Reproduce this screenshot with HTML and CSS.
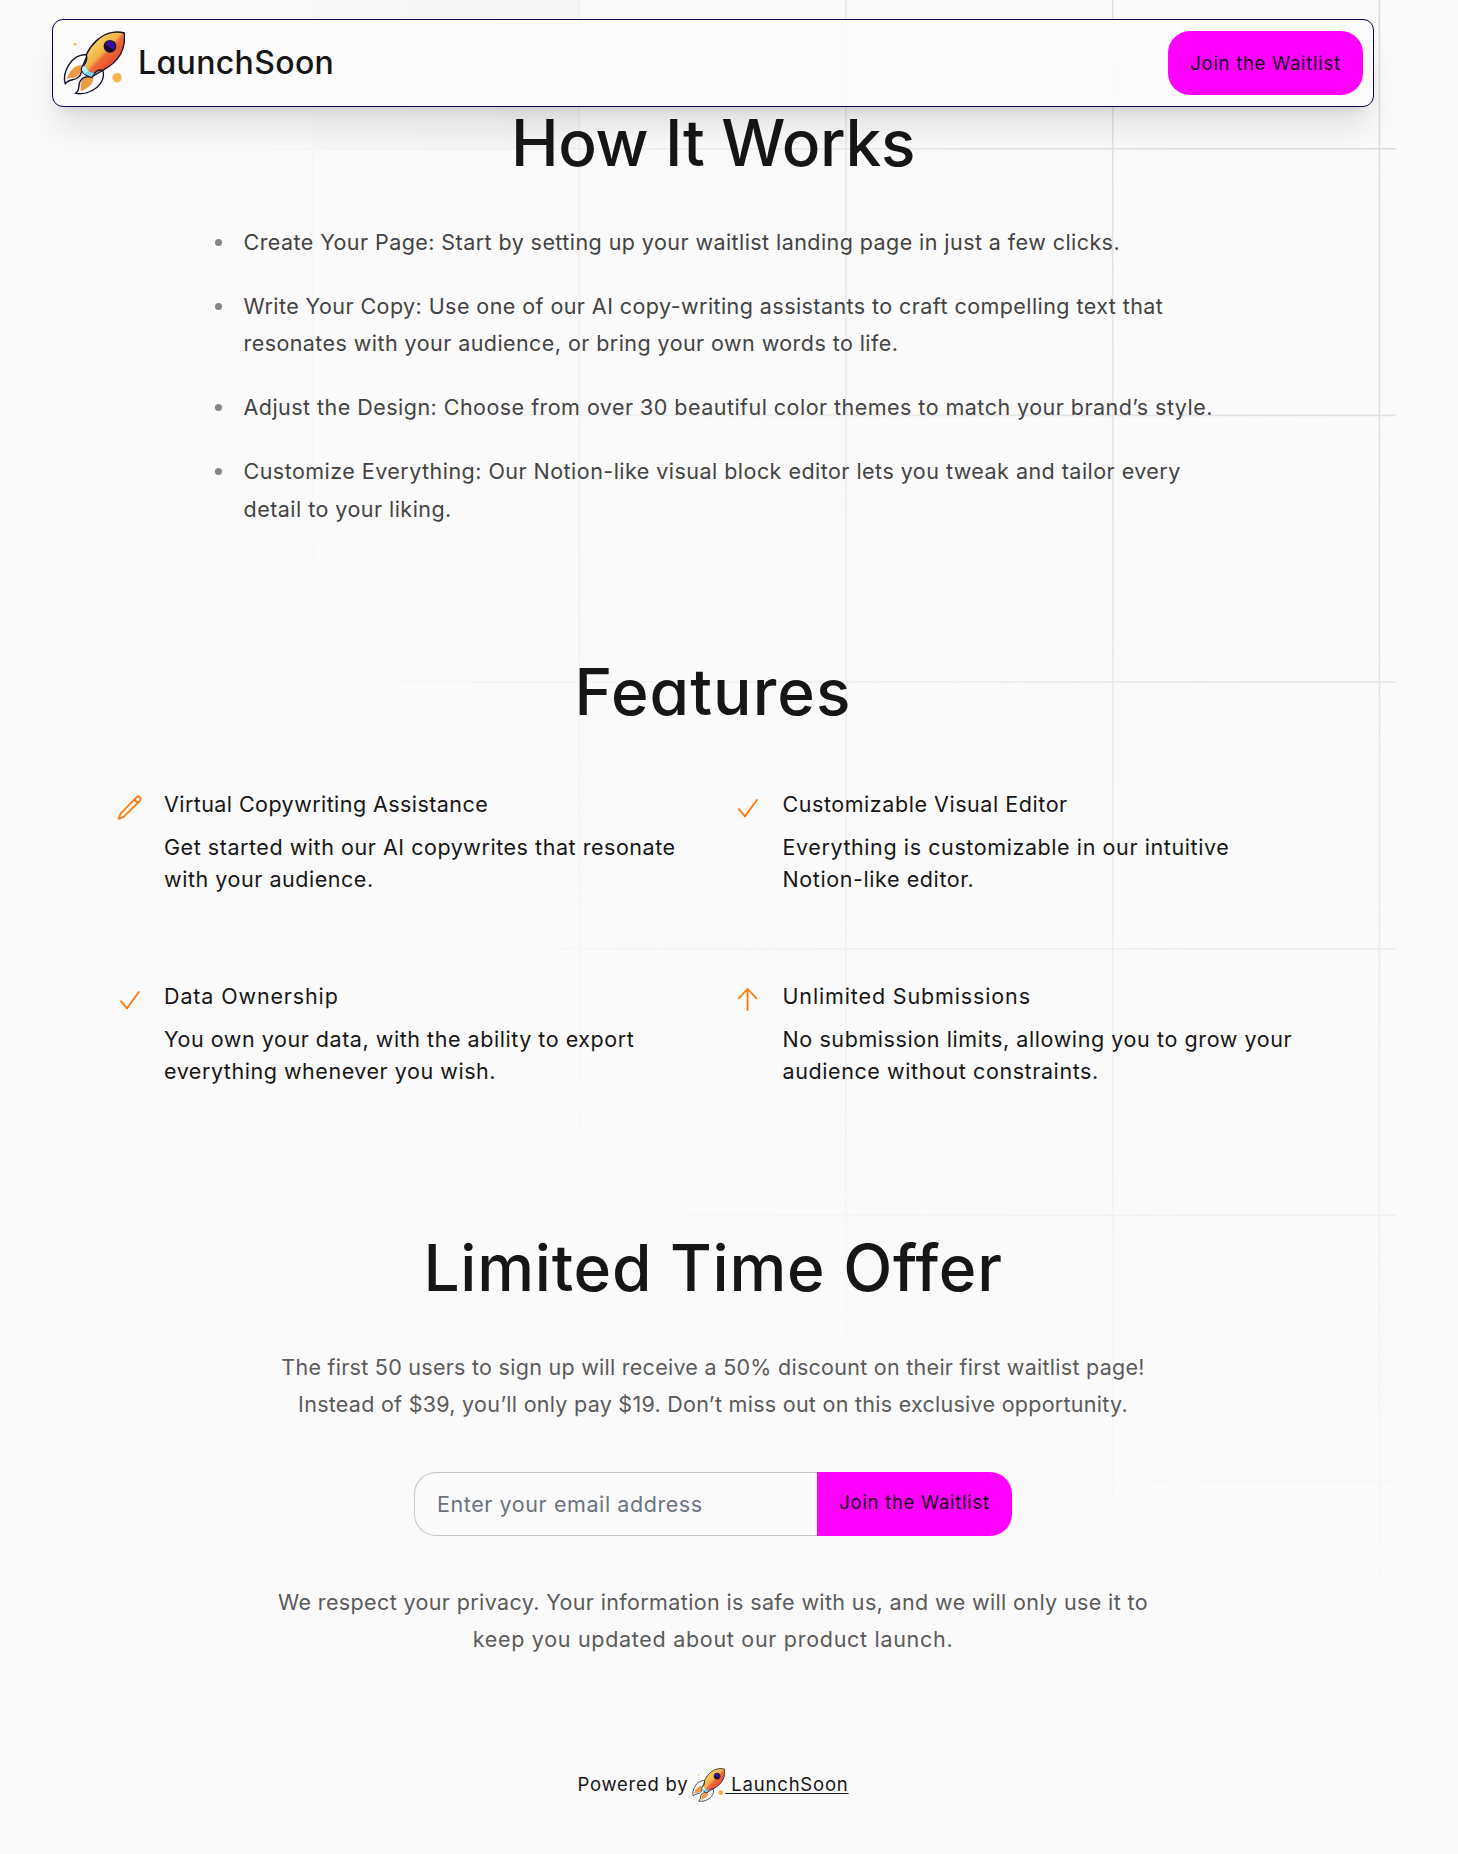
FILE: index.html
```html
<!DOCTYPE html>
<html lang="en">
<head>
<meta charset="utf-8">
<title>LaunchSoon</title>
<link rel="stylesheet" href="styles.css">
</head>
<body>
<svg class="backdrop" viewBox="0 0 1396 1640" aria-hidden="true">
  <defs>
    <radialGradient id="fade" gradientUnits="userSpaceOnUse" cx="0" cy="0" r="1" gradientTransform="translate(1396 0) scale(1230 1660)">
      <stop offset="0" stop-color="#fff"/>
      <stop offset="1" stop-color="#fff" stop-opacity="0"/>
    </radialGradient>
    <mask id="corner" maskUnits="userSpaceOnUse" x="0" y="0" width="1396" height="1640"><rect width="1396" height="1640" fill="url(#fade)"/></mask>
  </defs>
  <g mask="url(#corner)">
    <rect x="312.7" y="0" width="266.7" height="148.7" fill="#000" fill-opacity=".05"/>
    <path d="M46 0V1640M312.7 0V1640M579.4 0V1640M846 0V1640M1112.7 0V1640M1379.4 0V1640M0 148.8H1396M0 415.4H1396M0 682H1396M0 948.8H1396M0 1215.4H1396M0 1482H1396" fill="none" stroke="#dadadb" stroke-width="1.6"/>
  </g>
</svg>

<svg class="defs" width="0" height="0" aria-hidden="true">
  <defs>
    <linearGradient id="hull" x1="0" y1="0" x2="1" y2="1">
      <stop offset=".3" stop-color="#f6cb58"/><stop offset=".47" stop-color="#f4b04c"/><stop offset=".53" stop-color="#ee6a38"/><stop offset=".75" stop-color="#e9452c"/>
    </linearGradient>
    <symbol id="rocket" viewBox="63 63 192 192">
      <g stroke="#15122b" stroke-width="4.2" stroke-linejoin="round">
        <path fill="#fff" d="M142 135C118 131 97 146 85 167C74 186 70 204 76 222C84 207 101 212 112 204C121 198 125 188 124 178Z"/>
        <path fill="#fff" d="M188 181C194 198 187 216 172 231C154 247 128 254 106 250C121 241 114 229 119 217C125 203 139 199 152 202Z"/>
        <path stroke="none" fill="#f19b45" d="M124 165C106 165 88 180 80 208C91 201 103 207 112 199C120 191 123 184 124 178Z"/>
        <path stroke="none" fill="#f19b45" d="M160 203C162 218 147 235 120 244C126 235 119 226 124 215C130 204 143 202 152 202Z"/>
        <path fill="url(#hull)" d="M126 171C137 162 143 152 139 134C152 106 181 72 218 67C232 65 243 66 253 69C255 91 253 111 242 132C231 152 211 169 188 181C173 177 163 188 156 202C142 201 128 190 124 178Z"/>
        <path stroke="none" fill="#6fd3f2" d="M128 171L136 169C142 181 151 189 163 190L155 200C142 199 129 190 126 178Z"/>
        <path stroke="none" fill="#b5f4fb" d="M128 171L136 169C138 175 141 179 145 183L134 192C130 188 127 183 126 178Z"/>
        <circle cx="210" cy="109" r="17" fill="#3d0aa8"/>
        <path stroke="none" fill="#12052f" d="M195 104L222 119A16 16 0 0 1 195 104Z"/>
      </g>
      <circle cx="231" cy="203" r="14" fill="#f6b450"/>
      <circle cx="105" cy="103" r="4.5" fill="#f8c065"/>
    </symbol>
    <symbol id="check" viewBox="0 0 28 28"><path d="M4.8 16.1L11 23.4L22.8 7"/></symbol>
    <symbol id="pencil" viewBox="0 0 28 28"><path d="M2.6 25.8L4.6 20.6L20.2 4.6C21.4 3.4 22.9 3.3 23.9 4.2C24.9 5.2 24.8 6.7 23.6 8L7.7 23.8ZM19 5.8C19 8 20.3 9.2 22.4 9.2"/></symbol>
    <symbol id="arrow" viewBox="0 0 28 28"><path d="M13.6 25V4M4.8 13.4L13.6 4L22.4 13.4"/></symbol>
  </defs>
</svg>

<header class="nav">
  <a class="brand"><svg class="brand-mark"><use href="#rocket"/></svg><span class="brand-name">LaunchSoon</span></a>
  <a class="btn">Join the Waitlist</a>
</header>

<main>
  <section class="how">
    <h2 class="tight">How It Works</h2>
    <ul>
      <li>Create Your Page: Start by setting up your waitlist landing page in just a few clicks.</li>
      <li>Write Your Copy: Use one of our AI copy-writing assistants to craft compelling text that<br>resonates with your audience, or bring your own words to life.</li>
      <li class="wide">Adjust the Design: Choose from over 30 beautiful color themes to match your brand’s style.</li>
      <li class="wide">Customize Everything: Our Notion-like visual block editor lets you tweak and tailor every<br>detail to your liking.</li>
    </ul>
  </section>

  <section class="features">
    <h2>Features</h2>
    <div class="grid">
      <article><svg class="icon"><use href="#pencil"/></svg><div><h3>Virtual Copywriting Assistance</h3><p>Get started with our AI copywrites that resonate<br>with your audience.</p></div></article>
      <article><svg class="icon"><use href="#check"/></svg><div><h3 class="wide">Customizable Visual Editor</h3><p class="wide">Everything is customizable in our intuitive<br>Notion-like editor.</p></div></article>
      <article><svg class="icon"><use href="#check"/></svg><div><h3 class="wider">Data Ownership</h3><p>You own your data, with the ability to export<br>everything whenever you wish.</p></div></article>
      <article><svg class="icon"><use href="#arrow"/></svg><div><h3 class="wider">Unlimited Submissions</h3><p class="wide">No submission limits, allowing you to grow your<br>audience without constraints.</p></div></article>
    </div>
  </section>

  <section class="offer">
    <h2>Limited Time Offer</h2>
    <p class="copy">The first 50 users to sign up will receive a 50% discount on their first waitlist page!<br>Instead of $39, you’ll only pay $19. Don’t miss out on this exclusive opportunity.</p>
    <form class="signup"><input type="email" placeholder="Enter your email address"><button class="btn" type="button">Join the Waitlist</button></form>
    <p class="copy privacy">We respect your privacy. Your information is safe with us, and we will only use it to<br><span class="wider">keep you updated about our product launch.</span></p>
  </section>
</main>

<footer>
  <span>Powered by</span>
  <svg class="footer-mark"><use href="#rocket"/></svg>
  <a class="footer-link">&nbsp;LaunchSoon</a>
</footer>
</body>
</html>
```
FILE: styles.css
```css
* { box-sizing: border-box; }

html { background: #fafafa; overflow: hidden; }

body {
  margin: 0;
  position: relative;
  width: 1426px;
  min-height: 1854px;
  font: 400 21.5px/32px Inter, "Open Sans", sans-serif;
  color: #161616;
}

.backdrop {
  position: absolute;
  left: 0;
  top: 0;
  width: 1396px;
  height: 1640px;
  z-index: -1;
}

.defs { position: absolute; }

h2, h3, p, ul { margin: 0; padding: 0; font-weight: 400; }

.nav {
  position: relative;
  top: 0;
  z-index: 2;
  display: flex;
  align-items: center;
  justify-content: space-between;
  width: 1322px;
  height: 88px;
  margin: 19px auto 0;
  padding: 0 10px 0 8px;
  border: 1px solid #10004f;
  border-radius: 11px;
  background: rgba(251, 251, 251, .95);
  box-shadow: 0 26px 33px -6px rgba(0, 0, 0, .1), 0 10px 13px -8px rgba(0, 0, 0, .1);
}

.brand { display: flex; align-items: center; gap: 13px; }
.brand-mark { width: 64px; height: 64px; }
.brand-name {
  font-size: 32px;
  font-weight: 500;
  letter-spacing: .35px;
  font-feature-settings: "cv11";
}

.btn {
  display: flex;
  align-items: center;
  justify-content: center;
  width: 195px;
  height: 64px;
  padding: 0;
  border: 0;
  border-radius: 22px;
  background: #f0f;
  color: #160016;
  font: 400 18.5px/28px Inter, sans-serif;
  letter-spacing: .71px;
}

h2 {
  font-size: 64px;
  line-height: 72px;
  font-weight: 500;
  letter-spacing: 1.1px;
  text-align: center;
  font-feature-settings: "cv11";
}
h2.tight { letter-spacing: -.35px; }
.offer h2 { letter-spacing: .75px; }

.how ul {
  list-style: none;
  margin: 44.5px 0 0 243.5px;
  display: grid;
  gap: 26.5px;
  line-height: 37.5px;
  letter-spacing: .43px;
  color: #434343;
  white-space: nowrap;
}
.how li.wide { letter-spacing: .465px; }
.how li::before {
  content: "";
  float: left;
  width: 7px;
  height: 7px;
  margin: 15px 0 0 -28.5px;
  border-radius: 50%;
  background: #858585;
}

.features { margin-top: 127.5px; }
.grid {
  display: grid;
  grid-template-columns: 618.5px 1fr;
  row-gap: 85px;
  margin: 60px 0 0 115.5px;
  letter-spacing: .54px;
  white-space: nowrap;
}
.grid article { display: flex; gap: 20.5px; }
.grid h3 { font-size: 21.5px; margin-bottom: 11px; letter-spacing: .43px; }
.grid h3.wide { letter-spacing: .55px; }
.grid h3.wider { letter-spacing: .86px; }
.grid p.wide { letter-spacing: .59px; }
.icon {
  width: 28px;
  height: 28px;
  margin-top: 5px;
  fill: none;
  stroke: #ff7a0a;
  stroke-width: 1.8;
  stroke-linecap: round;
  stroke-linejoin: round;
}

.offer { margin-top: 145px; }
.copy {
  margin-top: 45px;
  line-height: 37.5px;
  letter-spacing: .27px;
  text-align: center;
  color: #5a5a5a;
}
.copy.privacy { margin-top: 47.5px; letter-spacing: .37px; }
.privacy .wider { letter-spacing: .7px; }

.signup { display: flex; width: 598px; height: 64px; margin: 48.5px auto 0; }
.signup input {
  flex: 1;
  min-width: 0;
  padding: 0 22px;
  border: 1px solid #c6c6c6;
  border-right: 0;
  border-radius: 22px 0 0 22px;
  background: #fafafa;
  font: inherit;
  letter-spacing: .58px;
}
.signup input::placeholder { color: #6b7280; opacity: 1; }
.signup .btn { border-radius: 0 22px 22px 0; padding-bottom: 4px; }

footer {
  display: flex;
  align-items: center;
  justify-content: center;
  height: 34px;
  margin-top: 108px;
  font-size: 18.5px;
  line-height: 34px;
  letter-spacing: .75px;
}
.footer-mark { width: 34px; height: 34px; margin: 3px 0 0 3px; }
.footer-link {
  letter-spacing: .8px;
  text-decoration: underline;
  text-decoration-thickness: 1px;
  text-underline-offset: 2px;
}
```
